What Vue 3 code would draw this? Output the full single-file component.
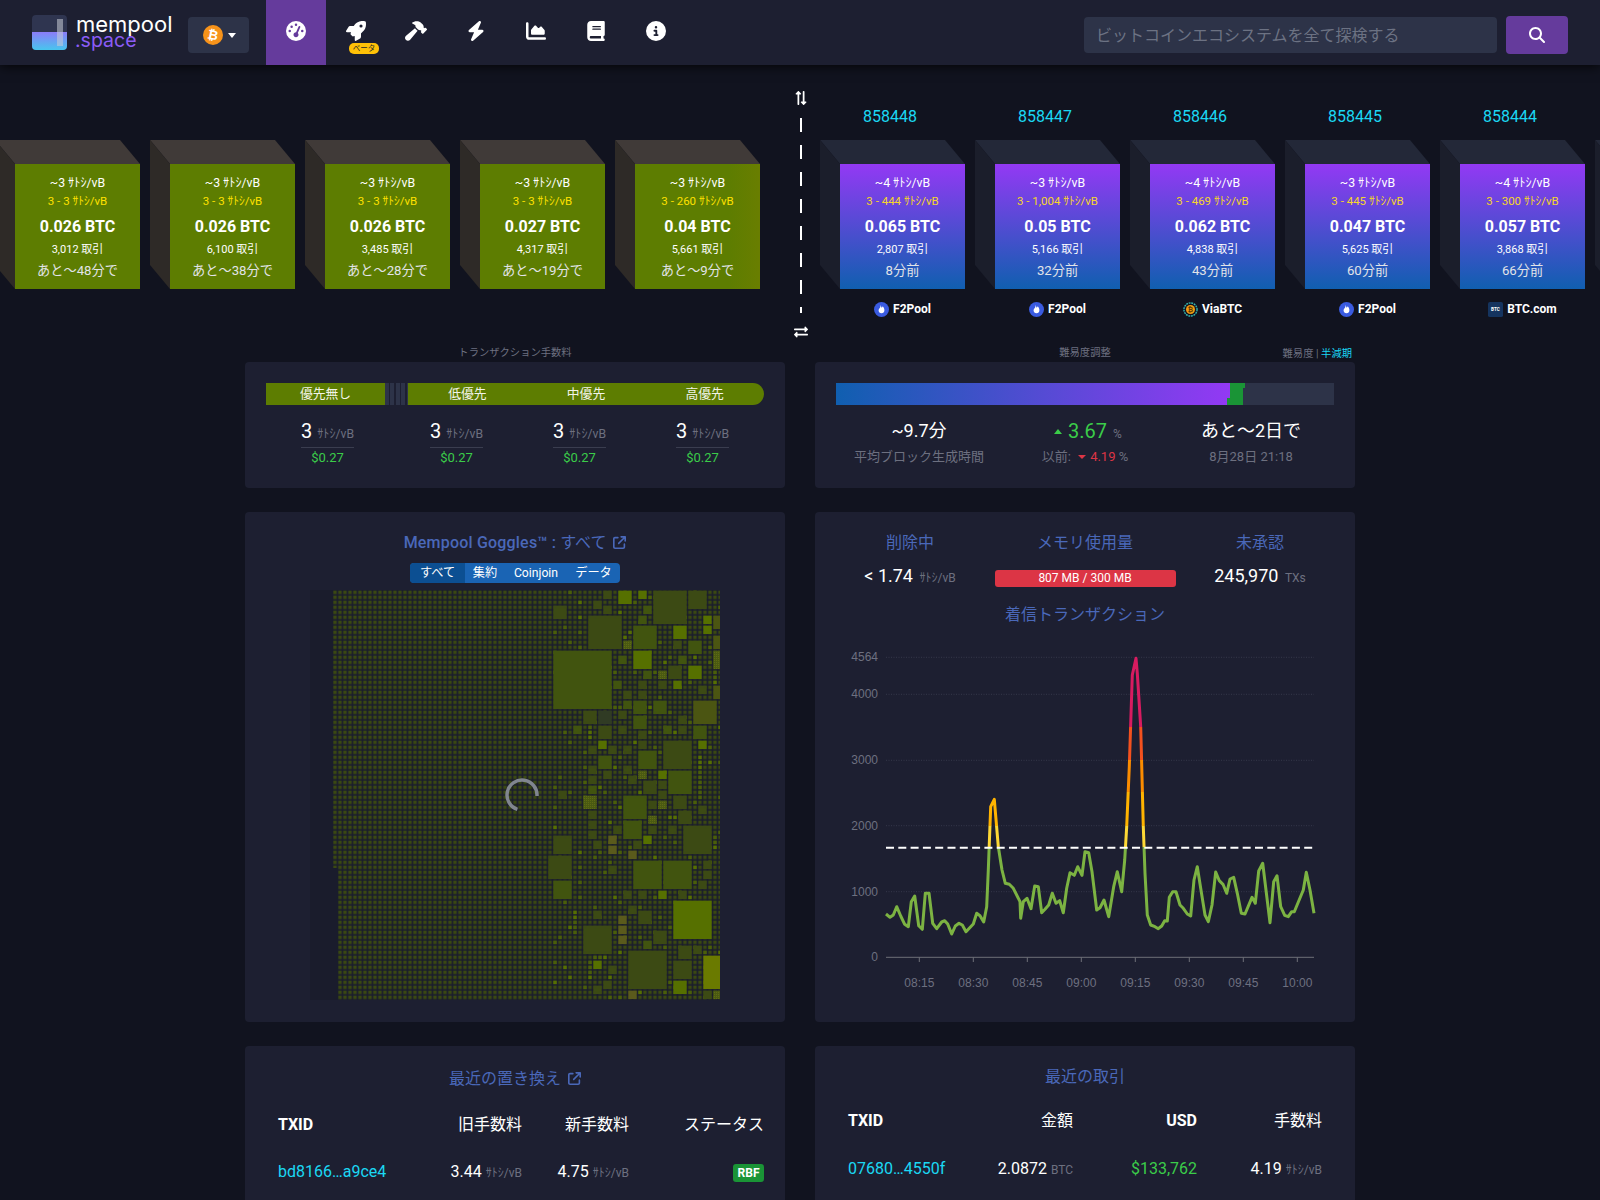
<template>
  <div class="page">
    <header class="topbar">
      <div class="brand">
        <svg class="brand-mark" viewBox="0 0 35 35">
          <defs>
            <linearGradient id="poolFill" x1="0" y1="0" x2="0" y2="1">
              <stop offset="0" stop-color="#8b7cf8" />
              <stop offset="1" stop-color="#47c6ee" />
            </linearGradient>
          </defs>
          <rect width="35" height="35" rx="4" fill="#2f3550" />
          <path d="M0 17h35v14a4 4 0 0 1-4 4H4a4 4 0 0 1-4-4z" fill="url(#poolFill)" />
          <rect x="25" y="4" width="6" height="27" fill="#c8ccd6" opacity="0.55" />
        </svg>
        <div class="brand-text">
          <span class="brand-top">mempool</span>
          <span class="brand-bottom">.space</span>
        </div>
      </div>
      <button class="net-btn">
        <svg class="coin" viewBox="0 0 20 20">
          <circle cx="10" cy="10" r="10" fill="#f7931a" />
          <text x="10" y="14.5" text-anchor="middle" class="coin-glyph" transform="rotate(12 10 10)">₿</text>
        </svg>
        <span class="caret"></span>
      </button>
      <nav class="nav">
        <a v-for="item in navItems" :key="item.key" class="nav-item" :class="{ active: item.key === 'dash' }">
          <svg class="nav-icon" :width="item.w" height="20" :viewBox="item.vb"><path :d="item.d" fill="#fff" /></svg>
          <span v-if="item.key === 'rocket'" class="beta">ベータ</span>
        </a>
      </nav>
      <div class="search">
        <input class="search-input" placeholder="ビットコインエコシステムを全て探検する" />
        <button class="search-btn">
          <svg width="16" height="16" viewBox="0 0 512 512"><path :d="icons.search" fill="#fff" /></svg>
        </button>
      </div>
    </header>

    <section class="chain">
      <div class="pending-blocks">
        <div v-for="b in pendingBlocks" :key="b.eta" class="cube pending" :class="{ tail: b.tail }">
          <div class="line fee">{{ b.fee }} <span>ｻﾄｼ/vB</span></div>
          <div class="line range">{{ b.range }} <span>ｻﾄｼ/vB</span></div>
          <div class="line size">{{ b.size }} BTC</div>
          <div class="line txs">{{ b.tx }} 取引</div>
          <div class="line time">{{ b.eta }}</div>
        </div>
      </div>

      <div class="divider">
        <svg class="swap" width="14" height="14" viewBox="0 0 512 512"><path :d="icons.exchange" fill="#fff" transform="rotate(90 256 256)" /></svg>
        <div class="dash"></div>
        <svg class="swap" width="14" height="14" viewBox="0 0 512 512"><path :d="icons.exchange" fill="#fff" /></svg>
      </div>

      <div class="mined-blocks">
        <div v-for="b in minedBlocks" :key="b.height" class="mined">
          <a class="height">{{ b.height }}</a>
          <div class="cube done">
            <div class="line fee">{{ b.fee }} <span>ｻﾄｼ/vB</span></div>
            <div class="line range">{{ b.range }} <span>ｻﾄｼ/vB</span></div>
            <div class="line size">{{ b.size }} BTC</div>
            <div class="line txs">{{ b.tx }} 取引</div>
            <div class="line time">{{ b.ago }}</div>
          </div>
          <div class="pool">
            <svg v-if="b.pool === 'F2Pool'" class="pool-icon" viewBox="0 0 16 16">
              <circle cx="8" cy="8" r="8" fill="#3a5be0" />
              <path d="M7 3c.6 1 .5 2 1 3 .8-.3 1.2-.8 1.3-1.4.9 1.200 1.800 2.500 1.800 4.200 0 1.900-1.300 3.200-3.100 3.200S4.900 10.700 4.900 9c0-1.200.6-2 1.300-2.700C6.800 5.600 7.100 4.400 7 3z" fill="#fff" />
            </svg>
            <svg v-else-if="b.pool === 'ViaBTC'" class="pool-icon" viewBox="0 0 16 16">
              <circle cx="8" cy="8" r="7" fill="none" stroke="#35b5b0" stroke-width="1.500" stroke-dasharray="2 .8" />
              <circle cx="8" cy="8" r="4.800" fill="#f39c12" />
              <text x="8" y="10.800" text-anchor="middle" class="via-glyph">₿</text>
            </svg>
            <svg v-else class="pool-icon" viewBox="0 0 16 16">
              <rect width="16" height="16" rx="2" fill="#15345f" />
              <text x="8" y="10" text-anchor="middle" class="btc-glyph">BTC</text>
            </svg>
            <span>{{ b.pool }}</span>
          </div>
        </div>
        <div class="mined">
          <div class="height-gap"></div>
          <div class="cube done"></div>
        </div>
      </div>
    </section>

    <main class="board">
      <div class="col">
        <div class="cap"><span></span><span>トランザクション手数料</span><span></span></div>
        <div class="card stat-card">
          <div class="fee-bar">
            <span class="seg none">優先無し</span>
            <span class="stripes"></span>
            <div class="seg-group">
              <span>低優先</span>
              <span>中優先</span>
              <span>高優先</span>
            </div>
          </div>
          <div class="fee-row">
            <div v-for="n in 4" :key="n" class="fee-item">
              <div class="fee-num">3 <span class="unit">ｻﾄｼ/vB</span></div>
              <div class="fee-usd">$0.27</div>
            </div>
          </div>
        </div>
      </div>

      <div class="col">
        <div class="cap">
          <span></span>
          <span>難易度調整</span>
          <span class="cap-right">難易度 <i>|</i> <a>半減期</a></span>
        </div>
        <div class="card stat-card">
          <div class="diff-bar">
            <svg class="diff-mark" viewBox="0 0 28 22" width="28" height="22">
              <path d="M3 0h15v5h-2v17H0v-7h3z" fill="#1a9436" />
            </svg>
          </div>
          <div class="diff-row">
            <div>
              <div class="big">~9.7分</div>
              <div class="sub">平均ブロック生成時間</div>
            </div>
            <div>
              <div class="big green"><span class="tri-up"></span>3.67 <span class="pct">%</span></div>
              <div class="sub">以前: <span class="tri-down"></span><span class="red">4.19</span> %</div>
            </div>
            <div>
              <div class="big">あと〜2日で</div>
              <div class="sub">8月28日 21:18</div>
            </div>
          </div>
        </div>
      </div>

      <div class="card goggles">
        <h5 class="title">
          <b>Mempool Goggles™ :</b> すべて
          <svg width="13" height="13" viewBox="0 0 512 512"><path :d="icons.external" fill="#4a68b9" /></svg>
        </h5>
        <div class="toggle">
          <span class="on">すべて</span>
          <span>集約</span>
          <span>Coinjoin</span>
          <span>データ</span>
        </div>
        <div class="map">
          <svg width="410" height="410" viewBox="0 0 410 410">
            <defs>
              <pattern id="cells" x="23.33" y="0.67" width="5" height="5" patternUnits="userSpaceOnUse">
                <rect width="3.4" height="3.4" fill="#3a4812" />
              </pattern>
              <pattern id="hatch" width="2" height="2" patternUnits="userSpaceOnUse">
                <rect width="2" height="2" fill="#4a5a12" />
                <rect width="1" height="1" fill="#5f6a14" />
              </pattern>
            </defs>
            <rect width="410" height="410" fill="#1a1c2c" />
            <polygon points="23,0 410,0 410,410 28,410 28,278 23,278" fill="url(#cells)" />
            <rect v-for="c in sparks" :key="c.k" :x="c.x" :y="c.y" width="3.4" height="3.4" :fill="c.f" />
            <rect v-for="t in tiles" :key="t.k" :x="t.x" :y="t.y" :width="t.w" :height="t.h" :fill="t.f" />
          </svg>
          <svg class="spinner" width="40" height="40" viewBox="0 0 40 40">
            <path d="M15.400 34.300A15 15 0 1 1 35 21" fill="none" stroke="#80858f" stroke-width="3.500" />
          </svg>
        </div>
      </div>

      <div class="card incoming">
        <div class="mem-row">
          <div>
            <h5 class="title">削除中</h5>
            <div class="mem-val">&lt; 1.74 <span class="unit">ｻﾄｼ/vB</span></div>
          </div>
          <div>
            <h5 class="title">メモリ使用量</h5>
            <div class="mem-bar">807 MB / 300 MB</div>
          </div>
          <div>
            <h5 class="title">未承認</h5>
            <div class="mem-val">245,970 <span class="unit">TXs</span></div>
          </div>
        </div>
        <h5 class="title chart-title">着信トランザクション</h5>
        <svg class="chart" width="500" height="370" viewBox="0 0 500 370">
          <defs>
            <linearGradient id="rate" gradientUnits="userSpaceOnUse" x1="0" y1="0" x2="0" y2="370">
              <stop v-for="s in rateStops" :key="s.o" :offset="s.o" :stop-color="s.c" />
            </linearGradient>
          </defs>
          <g v-for="g in yTicks" :key="g.label">
            <line v-if="g.label !== '0'" x1="56" :y1="g.y" x2="484" :y2="g.y" class="grid-line" />
            <text x="48" :y="g.y + 4" text-anchor="end" class="axis-text">{{ g.label }}</text>
          </g>
          <line x1="56" y1="317.300" x2="484" y2="317.300" class="axis-line" />
          <g v-for="t in xTicks" :key="t.label">
            <line :x1="t.x" y1="317.300" :x2="t.x" y2="322" class="axis-line" />
            <text :x="t.x" y="347" text-anchor="middle" class="axis-text">{{ t.label }}</text>
          </g>
          <polyline :points="ratePoints" fill="none" stroke="url(#rate)" stroke-width="3" stroke-linejoin="round" />
          <line x1="56" y1="207.700" x2="484" y2="207.700" stroke="#fff" stroke-width="2" stroke-dasharray="8 4.300" />
        </svg>
      </div>

      <div class="card recent replaced">
        <h5 class="title">
          最近の置き換え
          <svg width="13" height="13" viewBox="0 0 512 512"><path :d="icons.external" fill="#4a68b9" /></svg>
        </h5>
        <div class="rbf-table head">
          <b>TXID</b><span>旧手数料</span><span>新手数料</span><span>ステータス</span>
        </div>
        <div class="rbf-table row">
          <a>bd8166…a9ce4</a>
          <span>3.44 <em>ｻﾄｼ/vB</em></span>
          <span>4.75 <em>ｻﾄｼ/vB</em></span>
          <span><i class="rbf">RBF</i></span>
        </div>
      </div>

      <div class="card recent latest">
        <h5 class="title">最近の取引</h5>
        <div class="tx-table head">
          <b>TXID</b><span>金額</span><b class="end">USD</b><span>手数料</span>
        </div>
        <div class="tx-table row">
          <a>07680…4550f</a>
          <span>2.0872 <em>BTC</em></span>
          <span class="money">$133,762</span>
          <span>4.19 <em>ｻﾄｼ/vB</em></span>
        </div>
      </div>
    </main>
  </div>
</template>

<script setup>
const icons = {
  search: 'M416 208c0 45.9-14.9 88.3-40 122.7L502.6 457.4c12.5 12.5 12.5 32.8 0 45.3s-32.8 12.5-45.3 0L330.7 376c-34.4 25.2-76.8 40-122.7 40C93.1 416 0 322.9 0 208S93.1 0 208 0S416 93.1 416 208zM208 352a144 144 0 1 0 0-288 144 144 0 1 0 0 288z',
  exchange: 'M0 168v-16c0-13.255 10.745-24 24-24h360V80c0-21.367 25.899-32.042 40.971-16.971l80 80c9.372 9.373 9.372 24.569 0 33.941l-80 80C409.956 271.982 384 261.456 384 240v-48H24c-13.255 0-24-10.745-24-24zm488 152H128v-48c0-21.314-25.862-32.08-40.971-16.971l-80 80c-9.372 9.373-9.372 24.569 0 33.941l80 80C102.057 463.997 128 453.437 128 432v-48h360c13.255 0 24-10.745 24-24v-16c0-13.255-10.745-24-24-24z',
  external: 'M320 0c-17.7 0-32 14.3-32 32s14.3 32 32 32h82.7L201.4 265.4c-12.5 12.5-12.5 32.8 0 45.3s32.8 12.5 45.3 0L448 109.3V192c0 17.7 14.3 32 32 32s32-14.3 32-32V32c0-17.7-14.3-32-32-32H320zM80 32C35.8 32 0 67.8 0 112V432c0 44.2 35.8 80 80 80H400c44.2 0 80-35.8 80-80V320c0-17.7-14.3-32-32-32s-32 14.3-32 32V432c0 8.8-7.2 16-16 16H80c-8.8 0-16-7.2-16-16V112c0-8.8 7.2-16 16-16H192c17.7 0 32-14.3 32-32s-14.3-32-32-32H80z'
};

const navItems = [
  { key: 'dash', w: 20, vb: '0 0 512 512', d: 'M0 256a256 256 0 1 1 512 0A256 256 0 1 1 0 256zM288 96a32 32 0 1 0 -64 0 32 32 0 1 0 64 0zM256 416c35.3 0 64-28.7 64-64c0-17.4-6.9-33.1-18.1-44.6L366 161.7c5.3-12.1-.2-26.3-12.3-31.6s-26.3 .2-31.6 12.3L257.9 288c-.6 0-1.3 0-1.9 0c-35.3 0-64 28.7-64 64s28.7 64 64 64zM176 144a32 32 0 1 0 -64 0 32 32 0 1 0 64 0zM96 288a32 32 0 1 0 0-64 32 32 0 1 0 0 64zm352-32a32 32 0 1 0 -64 0 32 32 0 1 0 64 0z' },
  { key: 'rocket', w: 20, vb: '0 0 512 512', d: 'M156.6 384.9L125.7 354c-8.5-8.5-11.5-20.8-7.7-32.2c3-8.9 7-20.5 11.8-33.8L24 288c-8.6 0-16.6-4.6-20.9-12.1s-4.2-16.7 .2-24.1l52.5-88.5c13-21.9 36.5-35.3 61.9-35.3l82.3 0c2.4-4 4.8-7.7 7.2-11.3C289.1-4.1 411.1-8.1 483.9 5.3c11.6 2.1 20.6 11.2 22.8 22.8c13.4 72.9 9.3 194.8-111.4 276.7c-3.5 2.4-7.3 4.8-11.3 7.2v82.3c0 25.4-13.4 49-35.3 61.9l-88.5 52.5c-7.4 4.4-16.6 4.5-24.1 .2s-12.1-12.2-12.1-20.9V380.8c-14.1 4.9-26.4 8.9-35.7 11.9c-11.2 3.6-23.4 .5-31.8-7.8zM384 168a40 40 0 1 0 0-80 40 40 0 1 0 0 80z' },
  { key: 'hammer', w: 22, vb: '0 0 576 512', d: 'M413.5 237.5c-28.2 4.8-58.2-3.6-80-25.4l-38.1-38.1C280.4 159 272 138.8 272 117.6V105.5L192.3 62c-5.3-2.9-8.6-8.6-8.3-14.7s3.9-11.5 9.5-14l47.2-21C259.1 4.2 279 0 299.2 0h18.1c36.7 0 72 14 98.7 39.1l44.6 42c24.2 22.8 33.2 55.7 26.6 86L503 183l8-8c9.4-9.4 24.6-9.4 33.9 0l24 24c9.4 9.4 9.4 24.6 0 33.9l-88 88c-9.4 9.4-24.6 9.4-33.9 0l-24-24c-9.4-9.4-9.4-24.6 0-33.9l8-8-17.5-17.5zM27.4 377.1L260.9 182.6c3.5 4.9 7.5 9.6 11.8 14l38.1 38.1c6 6 12.4 11.2 19.2 15.7L134.9 484.6c-14.5 17.4-36 27.4-58.6 27.4C34.1 512 0 477.8 0 435.7c0-22.6 10.1-44.1 27.4-58.6z' },
  { key: 'bolt', w: 18, vb: '0 0 448 512', d: 'M349.4 44.6c5.9-13.7 1.5-29.7-10.6-38.5s-28.6-8-39.9 1.8l-256 224c-10 8.8-13.6 22.9-8.9 35.3S50.7 288 64 288H175.5L98.6 467.4c-5.9 13.7-1.5 29.7 10.6 38.5s28.6 8 39.9-1.8l256-224c10-8.8 13.6-22.9 8.9-35.3s-16.6-20.7-30-20.7H272.5L349.4 44.6z' },
  { key: 'chart', w: 20, vb: '0 0 512 512', d: 'M64 64c0-17.7-14.3-32-32-32S0 46.3 0 64V400c0 44.2 35.8 80 80 80H480c17.7 0 32-14.3 32-32s-14.3-32-32-32H80c-8.8 0-16-7.2-16-16V64zm96 288H448c17.7 0 32-14.3 32-32V251.8c0-7.6-2.7-15-7.7-20.8l-65.8-76.8c-12.1-14.2-33.7-15-46.9-1.8l-21 21c-10 10-26.4 9.2-35.4-1.6l-39.2-47c-12.6-15.1-35.7-15.4-48.7-.6L135.9 215c-5.1 5.8-7.9 13.3-7.9 21.1v84c0 17.7 14.3 32 32 32z' },
  { key: 'book', w: 18, vb: '0 0 448 512', d: 'M96 0C43 0 0 43 0 96V416c0 53 43 96 96 96H384h32c17.7 0 32-14.3 32-32s-14.3-32-32-32V384c17.7 0 32-14.3 32-32V32c0-17.7-14.3-32-32-32H384 96zm0 384H352v64H96c-17.7 0-32-14.3-32-32s14.3-32 32-32zm32-240c0-8.8 7.2-16 16-16H336c8.8 0 16 7.2 16 16s-7.2 16-16 16H144c-8.8 0-16-7.2-16-16zm16 48H336c8.8 0 16 7.2 16 16s-7.2 16-16 16H144c-8.8 0-16-7.2-16-16s7.2-16 16-16z' },
  { key: 'info', w: 20, vb: '0 0 512 512', d: 'M256 512A256 256 0 1 0 256 0a256 256 0 1 0 0 512zM216 336h24V272H216c-13.3 0-24-10.7-24-24s10.7-24 24-24h48c13.3 0 24 10.7 24 24v88h8c13.3 0 24 10.7 24 24s-10.7 24-24 24H216c-13.3 0-24-10.7-24-24s10.7-24 24-24zm40-208a32 32 0 1 1 0 64 32 32 0 1 1 0-64z' }
];

const pendingBlocks = [
  { fee: '~3', range: '3 - 3', size: '0.026', tx: '3,012', eta: 'あと〜48分で' },
  { fee: '~3', range: '3 - 3', size: '0.026', tx: '6,100', eta: 'あと〜38分で' },
  { fee: '~3', range: '3 - 3', size: '0.026', tx: '3,485', eta: 'あと〜28分で' },
  { fee: '~3', range: '3 - 3', size: '0.027', tx: '4,317', eta: 'あと〜19分で' },
  { fee: '~3', range: '3 - 260', size: '0.04', tx: '5,661', eta: 'あと〜9分で', tail: true }
];

const minedBlocks = [
  { height: 858448, fee: '~4', range: '3 - 444', size: '0.065', tx: '2,807', ago: '8分前', pool: 'F2Pool' },
  { height: 858447, fee: '~3', range: '3 - 1,004', size: '0.05', tx: '5,166', ago: '32分前', pool: 'F2Pool' },
  { height: 858446, fee: '~4', range: '3 - 469', size: '0.062', tx: '4,838', ago: '43分前', pool: 'ViaBTC' },
  { height: 858445, fee: '~3', range: '3 - 445', size: '0.047', tx: '5,625', ago: '60分前', pool: 'F2Pool' },
  { height: 858444, fee: '~4', range: '3 - 300', size: '0.057', tx: '3,868', ago: '66分前', pool: 'BTC.com' }
];

// treemap squares: x, y (px from the map's right part, x3), cells, shade, optional cells tall
const shades = ['#3c4a14', '#41540f', '#567000', '#5a5a1c', 'url(#hatch)', '#303b24', '#6a7a00', '#4b5512'];
const tileData = [
  [250,2,2,0],[295,2,3,2],[355,2,2,2],[400,2,7,0],[505,2,4,0],[220,32,2,0],[100,47,3,0],[250,47,2,0],[370,47,2,1],[205,77,7,0],
  [355,77,2,1],[550,77,2,2],[580,77,3,7],[340,107,5,1],[460,107,3,2],[550,107,2,2],[310,152,2,4],[460,152,2,0],[505,152,3,1],[580,137,3,7],
  [100,182,12,1],[295,197,2,1],[340,182,4,2],[475,197,2,1],[580,182,3,4,4],[370,242,2,1],[415,242,2,4],[445,227,3,0],[505,227,3,2],[280,272,2,1],
  [355,272,2,0],[415,272,2,0],[460,272,2,2],[535,287,2,0],[310,302,2,0],[355,302,2,0],[580,287,3,7],[310,332,2,1],[340,332,3,1],[400,332,3,1],
  [520,332,5,7],[190,362,3,0],[235,362,3,5],[295,362,2,0],[340,377,3,1],[475,377,2,0],[160,407,2,1],[235,407,3,0],[295,407,2,0],[430,407,2,1],
  [475,407,2,0],[520,407,3,1],[355,422,2,0],[235,452,2,2],[355,452,2,0],[535,452,2,2],[205,467,2,0],[265,467,2,0],[310,467,2,0],[430,452,6,0],
  [235,497,3,1],[355,482,4,1],[205,527,2,0],[310,527,2,0],[355,542,2,4],[415,542,2,2],[445,542,5,1],[250,542,2,0],[205,557,2,0],[325,557,2,0],
  [370,572,3,0],[415,572,2,0],[205,587,2,1],[415,602,2,0],[115,602,2,0],[190,617,3,4],[310,617,5,1],[385,632,2,0],[415,632,2,4],[460,617,3,0],
  [535,647,2,0],[205,662,2,0],[385,677,2,4],[475,662,3,0],[205,692,2,0],[310,692,4,1],[280,707,2,0],[385,707,2,0],[445,707,2,0],[490,707,6,0],
  [205,722,2,0],[100,737,4,0],[265,737,2,3],[370,737,2,2],[220,752,2,0],[340,752,2,0],[265,767,2,3],[325,782,2,3],[85,797,5,0],[265,827,2,0],
  [340,812,6,1],[430,812,6,1],[550,812,2,0],[550,842,2,0],[535,872,2,0],[100,872,4,1],[310,902,2,0],[355,902,2,0],[415,902,2,2],[475,902,2,0],
  [460,932,8,2],[325,947,2,0],[220,962,2,0],[355,962,3,0],[295,977,2,3],[295,1007,2,3],[190,1007,6,0],[400,1022,3,0],[295,1037,2,3],[370,1052,2,1],
  [475,1067,3,0],[520,1067,2,0],[325,1082,8,0],[550,1097,4,6,7],[460,1112,4,0],[220,1112,2,2],[265,1127,2,0],[460,1172,3,2],[250,1172,2,0],[220,1187,2,0],
  [325,1202,2,3],[550,1202,2,0],[580,1202,2,4]
];
const tiles = tileData.map(([zx, zy, n, s, tall], k) => ({
  k,
  x: 210 + zx / 3,
  y: zy / 3,
  w: n * 5 - 1.67,
  h: (tall || n) * 5 - 1.67,
  f: shades[s]
}));

// scattered brighter single cells on the busy right side
const sparks = [];
for (let i = 44; i < 78; i++) {
  for (let j = 0; j < 82; j++) {
    const h = (i * 7919 + j * 104729 + i * j * 31) % 97;
    if (h < 9) sparks.push({ k: `${i}-${j}`, x: 23.33 + i * 5, y: 0.67 + j * 5, f: h < 3 ? '#566f02' : '#4a5e0a' });
  }
}

const rateStops = [
  { o: 0.234, c: '#d81b60' }, { o: 0.2341, c: '#f4511e' },
  { o: 0.325, c: '#f4511e' }, { o: 0.3251, c: '#fb8c00' },
  { o: 0.412, c: '#fb8c00' }, { o: 0.4121, c: '#ffb300' },
  { o: 0.502, c: '#ffb300' }, { o: 0.5021, c: '#fdd835' },
  { o: 0.56, c: '#fdd835' }, { o: 0.5601, c: '#7cb342' }
];
const yTicks = [
  { label: '4564', y: 17.3 }, { label: '4000', y: 54.3 }, { label: '3000', y: 120.3 },
  { label: '2000', y: 185.7 }, { label: '1000', y: 251.7 }, { label: '0', y: 317.3 }
];
const xTicks = ['08:15', '08:30', '08:45', '09:00', '09:15', '09:30', '09:45', '10:00']
  .map((label, i) => ({ label, x: 89.3 + i * 54 }));

const rate = [168,822,180,832,190,825,200,800,212,828,224,853,235,860,244,785,254,768,266,857,277,868,286,760,297,760,308,850,320,866,335,846,344,842,353,852,365,882,376,858,387,850,397,855,408,875,430,852,440,820,450,827,461,846,470,800,475,690,482,500,493,478,505,620,516,690,526,730,538,733,550,745,570,785,572,835,580,785,591,775,603,806,614,738,625,740,635,818,645,808,656,795,667,760,678,790,689,782,700,818,710,745,720,698,733,706,743,680,756,706,765,635,776,638,786,695,800,810,810,803,822,780,836,830,851,740,862,695,875,755,884,660,890,560,898,380,907,105,918,55,922,100,932,260,940,560,945,700,952,825,962,855,975,860,985,866,995,858,1004,842,1012,843,1018,772,1028,755,1038,755,1050,795,1060,805,1072,822,1082,828,1092,720,1102,680,1112,745,1125,825,1135,845,1146,795,1157,696,1168,722,1179,733,1190,760,1200,717,1211,712,1222,760,1234,820,1245,822,1266,772,1276,790,1286,693,1298,670,1320,848,1331,725,1341,707,1352,800,1364,826,1375,830,1385,815,1393,815,1420,750,1429,697,1440,750,1452,820];
let ratePoints = '';
for (let i = 0; i < rate.length; i += 2) ratePoints += `${(rate[i] / 3).toFixed(1)},${(rate[i + 1] / 3).toFixed(1)} `;
</script>

<style scoped>
.page {
  width: 1600px;
  height: 1200px;
  overflow: hidden;
  background: #11131f;
  color: #fff;
  font-family: Roboto, "Noto Sans CJK JP", sans-serif;
}
a { color: #1bd8f4; }

.topbar {
  height: 65px;
  display: flex;
  align-items: center;
  background: #1d1f31;
  box-shadow: 0 0 12px #000;
  position: relative;
  z-index: 2;
}
.brand { display: flex; align-items: center; margin-left: 32px; width: 156px; }
.brand-mark { width: 35px; height: 35px; display: block; }
.brand-text { display: flex; flex-direction: column; margin-left: 9px; margin-top: -2px; font-family: Inter, sans-serif; font-size: 22px; line-height: 16px; }
.brand-top { color: #fff; }
.brand-bottom { color: #8b5cf6; margin-left: -1px; font-size: 19.500px; }
.net-btn {
  width: 61px;
  height: 36px;
  margin-top: 5px;
  display: flex;
  align-items: center;
  padding: 0 0 0 15px;
  gap: 5px;
  background: #2d3348;
  border: 0;
  border-radius: 4px;
}
.coin { width: 20px; height: 20px; }
.coin-glyph { font: 700 13px "DejaVu Sans", sans-serif; fill: #fff; }
.caret { width: 0; height: 0; border-left: 4px solid transparent; border-right: 4px solid transparent; border-top: 5px solid #fff; }
.nav { display: flex; margin-left: 17px; }
.nav-item {
  width: 60px;
  height: 65px;
  padding-top: 21px;
  box-sizing: border-box;
  display: flex;
  justify-content: center;
  position: relative;
}
.nav-item.active { background: #653b9c; }
.nav-icon { display: block; }
.beta {
  position: absolute;
  left: 23px;
  top: 43px;
  width: 30px;
  height: 11px;
  border-radius: 5px;
  background: #ffc107;
  color: #212529;
  font-size: 7.500px;
  line-height: 11px;
  text-align: center;
}
.search { display: flex; align-items: center; margin-left: auto; margin-right: 32px; margin-top: 5px; gap: 9px; }
.search-input {
  width: 413px;
  height: 36px;
  box-sizing: border-box;
  padding: 0 12px;
  background: #2d3348;
  border: 0;
  border-radius: 4px;
  color: #fff;
  font: 16px Roboto, "Noto Sans CJK JP", sans-serif;
  outline: none;
}
.search-input::placeholder { color: #6c7283; opacity: 1; }
.search-btn {
  width: 62px;
  height: 38px;
  display: flex;
  align-items: center;
  justify-content: center;
  background: #653b9c;
  border: 0;
  border-radius: 4px;
}

.chain { height: 275px; display: flex; overflow: hidden; }
.pending-blocks { flex: none; display: flex; gap: 30px; width: 760px; box-sizing: border-box; padding: 99px 0 0 15px; }
.cube {
  flex: none;
  position: relative;
  width: 125px;
  height: 125px;
  box-sizing: border-box;
  padding-top: 10px;
  text-align: center;
}
.cube::before {
  content: "";
  position: absolute;
  left: -20px;
  top: -24px;
  width: 145px;
  height: 24px;
  clip-path: polygon(0 0, 125px 0, 100% 100%, 20px 100%);
}
.cube::after {
  content: "";
  position: absolute;
  left: -20px;
  top: -24px;
  width: 20px;
  height: 149px;
  clip-path: polygon(0 0, 100% 24px, 100% 100%, 0 125px);
}
.pending { background: #5d7d01; }
.pending.tail { background: linear-gradient(90deg, #5d7d01 75%, #697e00); }
.pending::before { background: #403a38; }
.pending::after { background: #2e2a27; }
.done { background: linear-gradient(#9339f4, #105fb0); }
.done::before { background: #232838; }
.done::after { background: #1b1e2b; }
.line { white-space: nowrap; }
.fee { font-size: 12.300px; line-height: 18px; }
.range { font-size: 11.500px; line-height: 18px; color: #ffe100; }
.done .range { color: #f7d62a; }
.size { font-size: 16px; font-weight: 700; line-height: 22px; margin-top: 6px; }
.txs { font-size: 11px; line-height: 16px; margin-top: 4px; }
.time { font-size: 13.200px; line-height: 18px; margin-top: 4px; color: #e2e4e8; }

.divider {
  flex: none;
  width: 80px;
  box-sizing: border-box;
  padding: 26px 0 0 2px;
  display: flex;
  flex-direction: column;
  align-items: center;
}
.swap { flex: none; }
.dash {
  width: 2px;
  height: 195px;
  margin: 13px 0 12px;
  background: repeating-linear-gradient(#fff 0 14px, transparent 14px 27px);
}
.mined-blocks { flex: none; display: flex; gap: 30px; }
.mined { flex: none; width: 125px; }
.height {
  display: block;
  margin: 40px 0 35px -25px;
  width: 150px;
  text-align: center;
  font-size: 16px;
  line-height: 24px;
}
.height-gap { height: 99px; }
.pool {
  display: flex;
  justify-content: center;
  align-items: center;
  gap: 4px;
  margin-top: 10px;
  font-size: 12px;
  font-weight: 700;
  line-height: 20px;
}
.pool-icon { width: 15px; height: 15px; }
.via-glyph { font: 700 7px "DejaVu Sans", sans-serif; fill: #5a3a00; }
.btc-glyph { font: 700 5px Roboto, sans-serif; fill: #fff; }

.board {
  width: 1110px;
  margin: 0 auto;
  display: grid;
  grid-template-columns: 540px 540px;
  column-gap: 30px;
  row-gap: 24px;
}
.cap {
  display: grid;
  grid-template-columns: 1fr auto 1fr;
  height: 22px;
  line-height: 26px;
  font-size: 10.300px;
  color: #6d7080;
  text-align: center;
}
.cap-right { text-align: right; margin-right: 3px; line-height: 28px; }
.cap-right i { font-style: normal; }
.card { background: #1d1f31; border-radius: 4px; box-sizing: border-box; }
.stat-card { height: 126px; padding: 21px; }

.fee-bar { display: flex; height: 22px; font-size: 12.800px; line-height: 22px; text-align: center; color: #f2f4e8; }
.seg { width: 119px; background: #5d7d01; }
.stripes { width: 23px; background: repeating-linear-gradient(90deg, #2d3348 0 3.800px, #1d1f31 3.800px 5.400px); }
.seg-group { flex: 1; display: flex; background: #5d7d01; border-radius: 0 11px 11px 0; }
.seg-group span { flex: 1; }
.fee-row { display: flex; padding: 15px 0 0 35px; gap: 70px; text-align: center; }
.fee-item { width: 53px; flex: none; }
.fee-item:first-child { margin-right: 6px; }
.fee-num {
  height: 28px;
  box-sizing: border-box;
  font-size: 20px;
  line-height: 22px;
  border-bottom: 1px solid #3a3d4f;
  white-space: nowrap;
}
.unit { font-size: 12px; color: #6d7080; margin-left: 2px; }
.fee-num .unit { font-size: 12.200px; margin-left: 0; }
.fee-usd { font-size: 13px; line-height: 20px; color: #3bcc49; }

.diff-bar { position: relative; height: 22px; background: linear-gradient(90deg, #105fb0, #9339f4) 0 0 / 394px 100% no-repeat, #2d3348; }
.diff-mark { position: absolute; left: 391px; top: 0; }
.diff-row { display: grid; grid-template-columns: repeat(3, 166px); margin-top: 12px; text-align: center; }
.big { height: 28px; font-size: 18px; line-height: 28px; white-space: nowrap; }
.big.green { color: #3bcc49; font-size: 20px; padding-left: 6px; }
.pct { font-size: 12px; color: #6d7080; margin-left: 1px; }
.sub { height: 18px; font-size: 13px; line-height: 18px; margin-top: 3px; color: #6d7080; white-space: nowrap; }
.red { color: #dc3545; }
.tri-up, .tri-down { display: inline-block; width: 0; height: 0; border-left: 4.500px solid transparent; border-right: 4.500px solid transparent; }
.tri-up { border-bottom: 5px solid #3bcc49; margin-right: 6px; vertical-align: 4px; }
.tri-down { border-top: 4px solid #dc3545; margin: 0 4px; vertical-align: 2px; }

.title {
  margin: 0;
  font-size: 16px;
  font-weight: 400;
  line-height: 24px;
  color: #4a68b9;
  text-align: center;
  white-space: nowrap;
}
.title b { font-weight: 500; letter-spacing: 0.2px; }
.title svg { margin-left: 3px; vertical-align: -1px; }

.goggles { height: 510px; padding-top: 19px; }
.toggle {
  width: 210px;
  height: 20px;
  margin: 8px auto 7px;
  display: flex;
  background: #1a64b4;
  border-radius: 4px;
  overflow: hidden;
  font-size: 12.200px;
  line-height: 20px;
  text-align: center;
}
.toggle span { flex: none; width: 40px; }
.toggle .on { width: 55px; background: #0c4f92; }
.toggle span:nth-child(3) { width: 62px; }
.toggle span:nth-child(4) { width: 53px; }
.map { position: relative; width: 410px; height: 410px; margin: 0 auto; }
.map svg { display: block; }
.spinner { position: absolute; left: 192px; top: 185px; }

.incoming { height: 510px; padding-top: 19px; }
.mem-row { display: grid; grid-template-columns: repeat(3, 175px); justify-content: center; text-align: center; }
.mem-val { margin-top: 9px; font-size: 18px; line-height: 24px; white-space: nowrap; }
.mem-bar {
  margin: 15px -3px 0;
  height: 17px;
  border-radius: 3px;
  background: #dc3545;
  font-size: 12px;
  line-height: 17px;
}
.chart-title { margin-top: 13px; }
.chart { display: block; margin: 13px 0 0 15px; }
.grid-line { stroke: #35384a; stroke-dasharray: 1 1.500; }
.axis-line { stroke: #6e7079; }
.axis-text { font: 12px "Liberation Sans", sans-serif; fill: #6d7080; }

.recent { height: 200px; }
.replaced { padding: 21px 21px 0 33px; }
.replaced .title { margin-right: 12px; }
.latest { padding: 19px 33px 0; }
.rbf-table, .tx-table { display: grid; font-size: 16px; line-height: 24px; height: 24px; white-space: nowrap; text-align: right; }
.rbf-table { grid-template-columns: 130px 114px 107px 135px; }
.tx-table { grid-template-columns: 113px 112px 124px 125px; }
.rbf-table > :first-child, .tx-table > :first-child { text-align: left; }
.rbf-table.head { margin-top: 22px; }
.rbf-table.row { margin-top: 23px; }
.tx-table.head { margin-top: 20px; }
.tx-table.row { margin-top: 24px; }
.head b { font-weight: 700; }
em { font-style: normal; font-size: 12px; color: #6d7080; }
.money { color: #3bcc49; }
.rbf {
  display: inline-block;
  width: 31px;
  height: 18px;
  border-radius: 3px;
  background: #1a9436;
  font: 700 12px/18px Roboto, sans-serif;
  text-align: center;
  vertical-align: middle;
}
</style>

<style>
html, body { margin: 0; background: #11131f; overflow: hidden; }
</style>
